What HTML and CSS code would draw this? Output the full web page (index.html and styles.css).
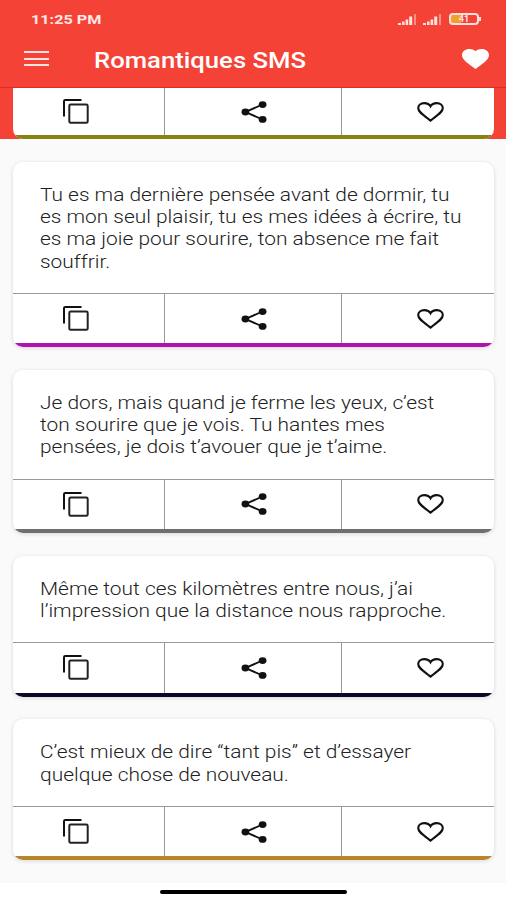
FILE: index.html
```html
<!DOCTYPE html>
<html lang="fr">
<head>
  <meta charset="UTF-8" />
  <meta name="viewport" content="width=device-width, initial-scale=1.0"/>
  <title>Romantiques SMS</title>
  <link rel="stylesheet" href="styles.css">
</head>
<body>
  <svg class="symbols" width="0" height="0">
    <symbol id="copy" viewBox="0 0 26 25">
      <path d="M1 17.5V2.2Q1 1 2.2 1H18.5" fill="none" stroke="#111" stroke-width="2"/>
      <rect x="6.3" y="5.6" width="18.4" height="18.2" rx="1.4" fill="none" stroke="#222" stroke-width="2"/>
    </symbol>
    <symbol id="share" viewBox="0 0 26 22">
      <path d="M21.5 3.5L4.5 11L21.5 18.5" fill="none" stroke="#111" stroke-width="1.9"/>
      <ellipse cx="4.4" cy="11" rx="3.9" ry="3.4" fill="#111"/>
      <ellipse cx="21.6" cy="3.6" rx="3.9" ry="3.4" fill="#111"/>
      <ellipse cx="21.6" cy="18.4" rx="3.9" ry="3.4" fill="#111"/>
    </symbol>
    <symbol id="heart" viewBox="0 0 27 20">
      <path d="M13.5 18.6L11.6 17.2C5 12.1 1.2 9.6 1.2 6.1C1.2 3.2 3.8 1.1 7.2 1.1C9.9 1.1 12.4 2.3 13.5 4.3C14.6 2.3 17.1 1.1 19.8 1.1C23.2 1.1 25.8 3.2 25.8 6.1C25.8 9.6 22 12.1 15.4 17.2Z" fill="none" stroke="#111" stroke-width="2.1"/>
    </symbol>
    <symbol id="heart-full" viewBox="2 3 20 18.35" preserveAspectRatio="none">
      <path d="M12 21.35l-1.45-1.32C5.4 15.36 2 12.28 2 8.5 2 5.42 4.42 3 7.5 3c1.74 0 3.41.81 4.5 2.09C13.09 3.81 14.76 3 16.5 3 19.58 3 22 5.42 22 8.5c0 3.78-3.4 6.86-8.55 11.54L12 21.35z" fill="#fff"/>
    </symbol>
    <symbol id="signal" viewBox="0 0 19 12">
      <path d="M0 12v-2h3v2zM4 12V8.5h2.6V12zM7.6 12V6.5h2.6V12zM11.2 12V3.5h3V12z" fill="#ffe0dc"/>
      <path d="M16 12V1h2v11z" fill="#fa8f86"/>
    </symbol>
  </svg>

  <header>
    <div class="status">
      <span class="time">11:25 PM</span>
      <div class="status-icons">
        <svg class="signal"><use href="#signal"/></svg>
        <svg class="signal"><use href="#signal"/></svg>
        <div class="battery"><span>41</span></div>
      </div>
    </div>
    <div class="toolbar">
      <div class="burger"><i></i><i></i><i></i></div>
      <h1>Romantiques SMS</h1>
      <svg class="fav"><use href="#heart-full"/></svg>
    </div>
  </header>

  <main>
    <div class="banner">
      <div class="card cut olive">
        <div class="actions">
          <a><svg class="copy"><use href="#copy"/></svg></a>
          <a><svg class="share"><use href="#share"/></svg></a>
          <a><svg class="heart"><use href="#heart"/></svg></a>
        </div>
      </div>
    </div>

    <div class="card purple">
      <p>Tu es ma dernière pensée avant de dormir, tu<br>es mon seul plaisir, tu es mes idées à écrire, tu<br>es ma joie pour sourire, ton absence me fait<br>souffrir.</p>
      <div class="actions">
        <a><svg class="copy"><use href="#copy"/></svg></a>
        <a><svg class="share"><use href="#share"/></svg></a>
        <a><svg class="heart"><use href="#heart"/></svg></a>
      </div>
    </div>

    <div class="card gray">
      <p>Je dors, mais quand je ferme les yeux, c’est<br>ton sourire que je vois. Tu hantes mes<br>pensées, je dois t’avouer que je t’aime.</p>
      <div class="actions">
        <a><svg class="copy"><use href="#copy"/></svg></a>
        <a><svg class="share"><use href="#share"/></svg></a>
        <a><svg class="heart"><use href="#heart"/></svg></a>
      </div>
    </div>

    <div class="card navy">
      <p>Même tout ces kilomètres entre nous, j’ai<br>l’impression que la distance nous rapproche.</p>
      <div class="actions">
        <a><svg class="copy"><use href="#copy"/></svg></a>
        <a><svg class="share"><use href="#share"/></svg></a>
        <a><svg class="heart"><use href="#heart"/></svg></a>
      </div>
    </div>

    <div class="card gold">
      <p>C’est mieux de dire “tant pis” et d’essayer<br>quelque chose de nouveau.</p>
      <div class="actions">
        <a><svg class="copy"><use href="#copy"/></svg></a>
        <a><svg class="share"><use href="#share"/></svg></a>
        <a><svg class="heart"><use href="#heart"/></svg></a>
      </div>
    </div>
  </main>

  <footer><div class="home-bar"></div></footer>
</body>
</html>
```

FILE: styles.css
```css
* {
  box-sizing: border-box;
}
body {
  margin: 0;
  height: 900px;
  overflow: hidden;
  display: flex;
  flex-direction: column;
  background: #fafafa;
  font-family: Roboto, sans-serif;
}
svg {
  display: block;
}
.symbols {
  display: none;
}
header {
  height: 88px;
  background: #f44336;
  border-bottom: 1px solid #e8271b;
  color: #fff;
}
.status {
  height: 38px;
  padding: 0 27px 0 31px;
  display: flex;
  align-items: center;
  justify-content: space-between;
}
.time {
  font-size: 13.5px;
  font-weight: 700;
  color: #ffe9e6;
  transform: scaleX(1.2);
  transform-origin: left;
}
.status-icons {
  display: flex;
  align-items: center;
  gap: 6px;
}
.signal {
  width: 19px;
  height: 12px;
}
.battery {
  width: 30px;
  height: 12px;
  margin-left: 1px;
  border: 2px solid #ffe0dc;
  border-radius: 4px;
  background: linear-gradient(to right, #f0a02c 40%, #f44336 40%);
  color: #ffe9e6;
  font-size: 9px;
  font-weight: 700;
  line-height: 8px;
  text-align: center;
  position: relative;
}
.battery::after {
  content: "";
  position: absolute;
  right: -4px;
  top: 2px;
  width: 2px;
  height: 4px;
  background: #ffe0dc;
}
.toolbar {
  height: 44px;
  padding: 0 17px 0 24px;
  display: flex;
  align-items: center;
}
.burger {
  width: 25px;
  height: 15px;
  margin-top: -3px;
  display: flex;
  flex-direction: column;
  justify-content: space-between;
}
.burger i {
  height: 2px;
  background: #ffe3e0;
}
h1 {
  margin: 2px auto 0 45px;
  font-size: 22px;
  font-weight: 500;
  line-height: 26px;
  white-space: nowrap;
  transform: scaleX(1.167);
  transform-origin: left;
}
.fav {
  width: 27px;
  height: 20px;
  margin-top: -2px;
}
main {
  flex: 1;
  display: flex;
  flex-direction: column;
}
.banner {
  background: #f44336;
  margin-bottom: 23px;
}
.card {
  width: 481px;
  margin: 0 0 22.7px 13px;
  background: #fff;
  border-radius: 10px;
  overflow: hidden;
  box-shadow: 0 1px 4px rgba(0, 0, 0, 0.14);
}
.cut {
  margin-bottom: 0;
  border-radius: 0 0 10px 10px;
  box-shadow: none;
}
.olive { border-color: #84840f; }
.purple { border-color: #b012ab; }
.gray { border-color: #6d706b; }
.navy { border-color: #0d0828; }
.gold { border-color: #b9852c; }
.card p {
  width: fit-content;
  margin: 0 0 0 26.5px;
  padding: 22px 0 20px;
  font-size: 18.5px;
  font-weight: 300;
  line-height: 22.2px;
  color: #222;
  white-space: nowrap;
  transform: scaleX(1.13);
  transform-origin: left;
}
.actions {
  display: grid;
  grid-template-columns: 151px 177px 153px;
  height: 54.5px;
  border-top: 1px solid #999;
  border-bottom: 4px solid;
  border-bottom-color: inherit;
}
.cut .actions {
  height: 51px;
  border-top: none;
}
.actions a {
  display: flex;
  align-items: center;
  justify-content: center;
}
.actions a + a {
  border-left: 1px solid #999;
}
.actions a:first-child {
  padding-right: 25px;
}
.actions a:nth-child(2) {
  padding-left: 1px;
}
.actions a:last-child {
  padding-left: 24px;
}
.copy {
  width: 26px;
  height: 25px;
}
.share {
  width: 26px;
  height: 22px;
}
.heart {
  width: 27px;
  height: 20px;
}
footer {
  height: 17px;
  background: #fff;
  display: flex;
  align-items: center;
  justify-content: center;
}
.home-bar {
  width: 187px;
  height: 4px;
  border-radius: 2px;
  background: #000;
}
```
